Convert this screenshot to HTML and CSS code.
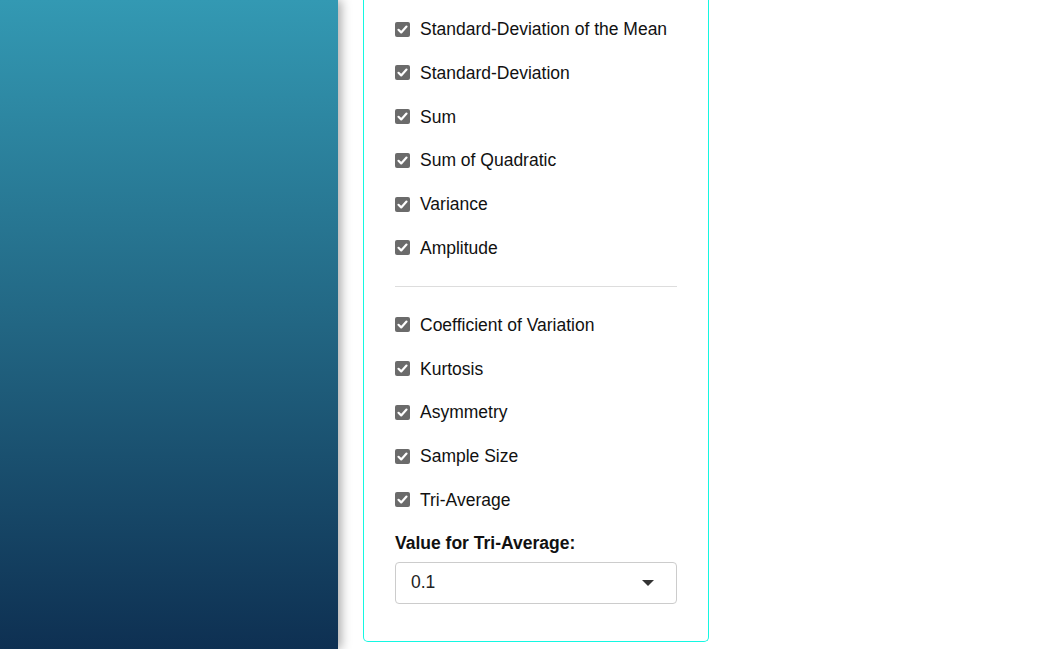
FILE: index.html
```html
<!DOCTYPE html>
<html>
<head>
<meta charset="utf-8">
<link rel="stylesheet" href="styles.css">
</head>
<body>
<div class="layout">
  <aside class="sidebar"></aside>
  <main class="main">
    <section class="panel">
      <div class="group">
        <label class="check"><input type="checkbox" checked><span>Standard-Deviation of the Mean</span></label>
        <label class="check"><input type="checkbox" checked><span>Standard-Deviation</span></label>
        <label class="check"><input type="checkbox" checked><span>Sum</span></label>
        <label class="check"><input type="checkbox" checked><span>Sum of Quadratic</span></label>
        <label class="check"><input type="checkbox" checked><span>Variance</span></label>
        <label class="check"><input type="checkbox" checked><span>Amplitude</span></label>
      </div>
      <hr class="divider">
      <div class="group">
        <label class="check"><input type="checkbox" checked><span>Coefficient of Variation</span></label>
        <label class="check"><input type="checkbox" checked><span>Kurtosis</span></label>
        <label class="check"><input type="checkbox" checked><span>Asymmetry</span></label>
        <label class="check"><input type="checkbox" checked><span>Sample Size</span></label>
        <label class="check"><input type="checkbox" checked><span>Tri-Average</span></label>
      </div>
      <div class="field">
        <div class="field-label">Value for Tri-Average:</div>
        <div class="select">
          <span>0.1</span>
          <svg class="caret" width="12" height="6" viewBox="0 0 12 6"><path d="M0 0H12L6 6Z" fill="#333"/></svg>
        </div>
      </div>
    </section>
  </main>
</div>
</body>
</html>
```
FILE: styles.css
```css
html, body {
  margin: 0;
  padding: 0;
  background: #fff;
  font-family: "Liberation Sans", Arial, sans-serif;
  color: #111;
}
.layout {
  display: flex;
  height: 649px;
  overflow: hidden;
}
.sidebar {
  width: 338px;
  flex: none;
  background: linear-gradient(to bottom, #3399b3 0%, #226683 50%, #0e3052 100%);
  box-shadow: 3px 0 10px rgba(0, 0, 0, 0.35);
  position: relative;
  z-index: 1;
}
.main {
  flex: 1;
  padding-left: 25px;
}
.panel {
  width: 282px;
  border: 1px solid #14f7e2;
  border-top: 0;
  border-radius: 0 0 5px 5px;
  padding: 17px 31px 37px 31px;
}
.group {
  display: flex;
  flex-direction: column;
  gap: 19.75px;
}
.check {
  display: flex;
  align-items: center;
  height: 24px;
  font-size: 17.5px;
  line-height: 24px;
  white-space: nowrap;
}
.check input {
  appearance: none;
  -webkit-appearance: none;
  width: 15px;
  height: 15px;
  margin: 0 10px 0 0;
  border-radius: 2px;
  background-color: #6b6b6b;
  background-image: url("data:image/svg+xml;utf8,<svg xmlns='http://www.w3.org/2000/svg' viewBox='0 0 15 15'><path d='M3.5 7.8 L6.2 10.4 L11.5 4.6' fill='none' stroke='white' stroke-width='2.2' stroke-linecap='round' stroke-linejoin='round'/></svg>");
  background-size: 15px 15px;
  flex: none;
}
.divider {
  border: 0;
  border-top: 1px solid #ddd;
  margin: 26px 0 26px 0;
}
.field {
  margin-top: 19px;
}
.field-label {
  font-weight: bold;
  font-size: 17.5px;
  line-height: 24px;
  margin-bottom: 7px;
  white-space: nowrap;
}
.select {
  display: flex;
  align-items: center;
  justify-content: space-between;
  height: 40px;
  border: 1px solid #ccc;
  border-radius: 4px;
  padding: 0 22px 0 15px;
  font-size: 17.5px;
  color: #222;
}
```
